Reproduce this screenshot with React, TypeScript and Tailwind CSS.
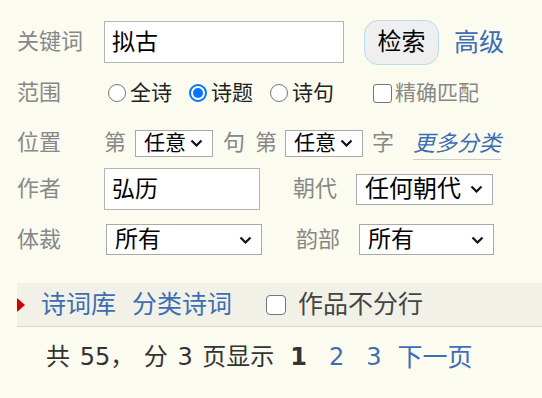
const font = { fontFamily: '"DejaVu Sans", "Noto Sans CJK SC", sans-serif' };

function Chevron() {
  return (
    <svg width="13" height="8" viewBox="0 0 13 8" className="pointer-events-none absolute right-[9px] top-1/2 -translate-y-1/2">
      <path d="M1.5 1.5 L6.5 6.5 L11.5 1.5" fill="none" stroke="#111" strokeWidth="2.2" />
    </svg>
  );
}

function Select({ value, className, textClass }: { value: string; className: string; textClass: string }) {
  return (
    <span className={`relative inline-flex shrink-0 items-center border border-[#a9a9a9] bg-white ${className}`}>
      <span className={`pl-[8px] leading-none text-black ${textClass}`}>{value}</span>
      <Chevron />
    </span>
  );
}

function Radio({ checked, className = '' }: { checked?: boolean; className?: string }) {
  return checked ? (
    <span className={`flex h-[18px] w-[18px] shrink-0 items-center justify-center rounded-full border-2 border-[#0075ff] bg-white ${className}`}>
      <span className="h-[10px] w-[10px] rounded-full bg-[#0075ff]" />
    </span>
  ) : (
    <span className={`block h-[18px] w-[18px] shrink-0 rounded-full border border-[#767676] bg-white ${className}`} />
  );
}

export default function App() {
  const label = 'text-[22px] leading-none text-[#888888]';
  return (
    <div style={font} className="h-[398px] w-[542px] overflow-hidden bg-[#fbfbf0] pl-[17px] pt-[21px]">
      {/* keyword */}
      <div className="flex h-[42px] items-center">
        <span className={`w-[87px] ${label}`}>关键词</span>
        <div className="flex h-[42px] w-[240px] items-center border border-[#b4b4b4] bg-white pl-[7px] text-[23px] text-black">
          拟古
        </div>
        <button className="ml-[20px] h-[45px] w-[75px] rounded-[14px] border border-[#b9dcea] bg-[#efefef] text-[24px] text-black">
          检索
        </button>
        <a className="ml-[15px] text-[25px] leading-none text-[#3d6db5]">高级</a>
      </div>

      {/* scope */}
      <div className="mt-[17px] flex h-[26px] items-center">
        <span className={`w-[91px] ${label}`}>范围</span>
        <Radio />
        <span className="ml-[4px] text-[21px] leading-none text-[#222]">全诗</span>
        <Radio checked className="ml-[17px]" />
        <span className="ml-[4px] text-[21px] leading-none text-[#222]">诗题</span>
        <Radio className="ml-[17px]" />
        <span className="ml-[4px] text-[21px] leading-none text-[#222]">诗句</span>
        <span className="ml-[39px] block h-[19px] w-[19px] shrink-0 rounded-[3px] border border-[#767676] bg-white" />
        <span className="ml-[3px] text-[21px] leading-none text-[#888888]">精确匹配</span>
      </div>

      {/* position */}
      <div className="mt-[23px] flex h-[28px] items-center">
        <span className={`w-[87px] ${label}`}>位置</span>
        <span className={label}>第</span>
        <Select value="任意" className="ml-[9px] h-[27px] w-[78px]" textClass="text-[21px]" />
        <span className={`ml-[10px] ${label}`}>句</span>
        <span className={`ml-[10px] ${label}`}>第</span>
        <Select value="任意" className="ml-[8px] h-[27px] w-[78px]" textClass="text-[21px]" />
        <span className={`ml-[9px] ${label}`}>字</span>
        <a className="ml-[19px] mt-[6px] border-b border-[#cccccc] pb-[4px] text-[22px] italic leading-none text-[#3d6db5]">
          更多分类
        </a>
      </div>

      {/* author */}
      <div className="mt-[11px] flex h-[42px] items-center">
        <span className={`w-[87px] ${label}`}>作者</span>
        <div className="flex h-[42px] w-[156px] items-center border border-[#b4b4b4] bg-white pl-[7px] text-[23px] text-black">
          弘历
        </div>
        <span className={`ml-[33px] ${label}`}>朝代</span>
        <Select value="任何朝代" className="ml-[19px] h-[31px] w-[137px]" textClass="text-[24px]" />
      </div>

      {/* genre */}
      <div className="mt-[14px] flex h-[31px] items-center">
        <span className={`w-[89px] ${label}`}>体裁</span>
        <Select value="所有" className="h-[31px] w-[156px]" textClass="text-[23px]" />
        <span className={`ml-[34px] ${label}`}>韵部</span>
        <Select value="所有" className="ml-[19px] h-[31px] w-[135px]" textClass="text-[23px]" />
      </div>

      {/* tab bar */}
      <div className="mt-[28px] flex h-[44px] items-center border-b border-[#d6d6d6] bg-[#f1f1e8]">
        <svg width="8" height="14" viewBox="0 0 8 14">
          <path d="M0 0 L8 7 L0 14 Z" fill="#d40000" />
        </svg>
        <a className="ml-[16px] text-[25px] leading-none text-[#3d6db5]">诗词库</a>
        <a className="ml-[16px] text-[25px] leading-none text-[#3d6db5]">分类诗词</a>
        <span className="ml-[34px] block h-[20px] w-[20px] shrink-0 rounded-[4px] border border-[#767676] bg-white" />
        <span className="ml-[12px] text-[25px] leading-none text-[#444444]">作品不分行</span>
      </div>

      {/* pagination */}
      <div className="mt-[15px] flex h-[30px] items-center text-[24px] leading-none text-[#333333]">
        <span className="ml-[29px] whitespace-pre [word-spacing:2px]">共 55， 分 3 页显示</span>
        <span className="ml-[16px] font-bold">1</span>
        <a className="ml-[22px] text-[#3d6db5]">2</a>
        <a className="ml-[22px] text-[#3d6db5]">3</a>
        <a className="ml-[16px] text-[25px] text-[#3d6db5]">下一页</a>
      </div>
    </div>
  );
}
